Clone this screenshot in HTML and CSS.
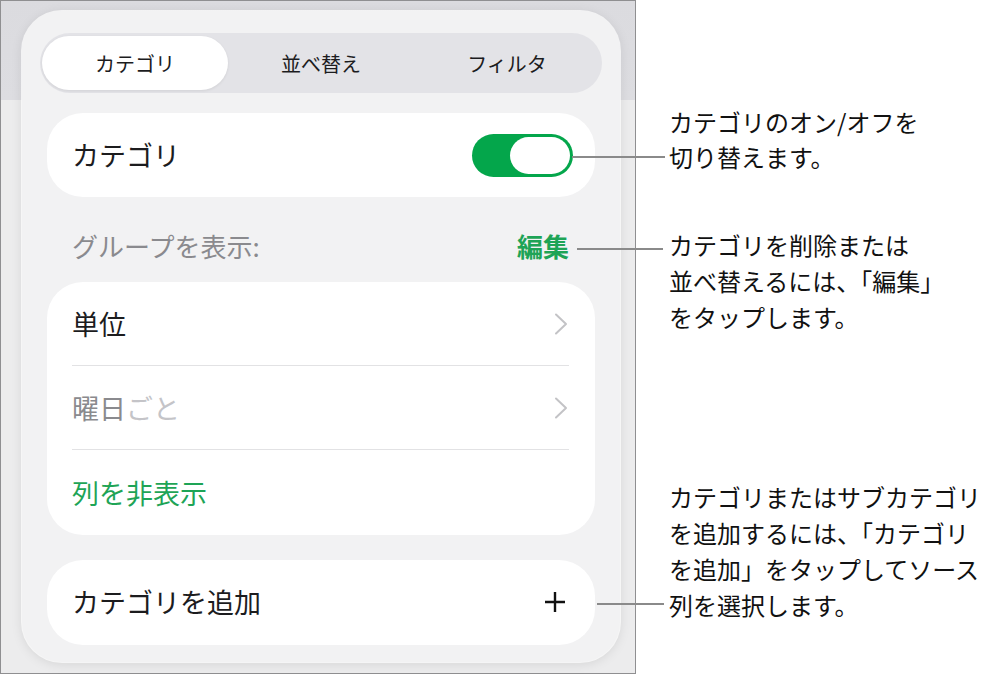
FILE: index.html
```html
<!DOCTYPE html>
<html lang="ja">
<head>
<meta charset="utf-8">
<title>カテゴリ</title>
<link rel="stylesheet" href="styles.css">
</head>
<body>
<div class="stage">
  <div class="frame">
    <div class="panel">
      <div class="segmented">
        <div class="seg seg-active">カテゴリ</div>
        <div class="seg">並べ替え</div>
        <div class="seg">フィルタ</div>
      </div>

      <div class="card card-single">
        <div class="row">
          <span class="label">カテゴリ</span>
          <span class="toggle"><span class="knob"></span></span>
        </div>
      </div>

      <div class="section-head">
        <span class="head-label">グループを表示:</span>
        <span class="head-edit">編集</span>
      </div>

      <div class="card">
        <div class="row row-divided">
          <span class="label">単位</span>
          <svg class="chev" width="14" height="22" viewBox="0 0 14 22"><polyline points="2,1.5 12,11 2,20.5" fill="none" stroke="#c3c3c6" stroke-width="2" stroke-linecap="round" stroke-linejoin="round"/></svg>
        </div>
        <div class="row row-divided">
          <span class="label"><span class="muted">曜日</span><span class="faint">ごと</span></span>
          <svg class="chev" width="14" height="22" viewBox="0 0 14 22"><polyline points="2,1.5 12,11 2,20.5" fill="none" stroke="#c3c3c6" stroke-width="2" stroke-linecap="round" stroke-linejoin="round"/></svg>
        </div>
        <div class="row row-last">
          <span class="label green">列を非表示</span>
        </div>
      </div>

      <div class="card card-single card-add">
        <div class="row">
          <span class="label">カテゴリを追加</span>
          <svg class="plus" width="22" height="22" viewBox="0 0 22 22"><path d="M11 1v20M1 11h20" stroke="#111" stroke-width="2.4" fill="none"/></svg>
        </div>
      </div>
    </div>
  </div>

  <div class="callout-line line-1"></div>
  <div class="callout-line line-2"></div>
  <div class="callout-line line-3"></div>

  <div class="callout callout-1">カテゴリのオン/オフを<br>切り替えます。</div>
  <div class="callout callout-2">カテゴリを削除または<br>並べ替えるには、「編集」<br>をタップします。</div>
  <div class="callout callout-3">カテゴリまたはサブカテゴリ<br>を追加するには、「カテゴリ<br>を追加」をタップしてソース<br>列を選択します。</div>
</div>
</body>
</html>
```

FILE: styles.css
```css
* { box-sizing: border-box; }

html, body {
  margin: 0;
  padding: 0;
  background: #ffffff;
}

body {
  font-family: "Noto Sans CJK JP", "Noto Sans", sans-serif;
  color: #1c1c1e;
}

.stage {
  position: relative;
  width: 998px;
  height: 676px;
  overflow: hidden;
}

.frame {
  width: 636px;
  height: 674px;
  border: 1px solid #8f8f91;
  background: linear-gradient(to bottom, #dbdbdf 0, #dddde1 99px, #ececed 99px, #ececed 100%);
  padding: 10px 0 0 21px;
}

.panel {
  width: 598px;
  height: 651px;
  border-radius: 40px;
  background: #f2f2f3;
  box-shadow: 0 0 0 1px rgba(255,255,255,0.7), 0 2px 12px rgba(0,0,0,0.10);
  padding: 22px 18px 17px;
  display: flex;
  flex-direction: column;
}

.segmented {
  height: 60px;
  border-radius: 30px;
  background: #e3e3e7;
  padding: 3px 2px;
  display: grid;
  grid-template-columns: 1fr 1fr 1fr;
  flex-shrink: 0;
}

.seg {
  display: flex;
  align-items: center;
  justify-content: center;
  font-size: 20px;
  color: #1c1c1e;
  border-radius: 28px;
}

.seg-active {
  background: #ffffff;
  box-shadow: 0 1px 3px rgba(0,0,0,0.08);
}

.card {
  margin: 0 7px;
  background: #ffffff;
  border-radius: 36px;
  padding: 0 26px 0 25px;
  flex-shrink: 0;
}

.card-single {
  margin-top: 20px;
  height: 84px;
}

.card-add {
  margin-top: 25px;
  height: 85px;
}

.row {
  height: 84px;
  display: flex;
  align-items: center;
  justify-content: space-between;
}

.row-divided {
  border-bottom: 1.5px solid #e2e2e4;
}

.row-last {
  height: 85px;
}

.label {
  font-size: 27px;
  line-height: 36px;
  color: #1c1c1e;
}

.muted { color: #8a8a8e; }
.faint { color: #c4c4c8; }
.green { color: #1ea456; }

.toggle {
  width: 101px;
  height: 43px;
  border-radius: 22px;
  background: #04a64b;
  margin-right: -4px;
  padding: 3px 3px 3px 38px;
  display: flex;
}

.knob {
  flex: 1;
  border-radius: 19px;
  background: #ffffff;
}

.chev {
  display: block;
  margin-right: 1px;
}

.plus {
  display: block;
  margin-right: 3px;
}

.section-head {
  margin: 30px 7px 19px;
  padding: 0 26px 0 25px;
  display: flex;
  justify-content: space-between;
  align-items: center;
  height: 36px;
  flex-shrink: 0;
}

.head-label {
  font-size: 26px;
  color: #8a8a8e;
}

.head-edit {
  font-size: 26px;
  font-weight: 700;
  color: #1ea456;
}

.callout-line {
  position: absolute;
  height: 2px;
  background: #8a8a8a;
}

.line-1 { left: 572px; top: 156px; width: 93px; }
.line-2 { left: 577px; top: 248px; width: 86px; }
.line-3 { left: 597px; top: 603px; width: 67px; }

.callout {
  position: absolute;
  left: 669px;
  font-size: 24px;
  line-height: 36px;
  color: #111111;
  white-space: nowrap;
}

.callout-1 { top: 104px; line-height: 35px; }
.callout-2 { top: 227px; }
.callout-3 { top: 479px; }
```
